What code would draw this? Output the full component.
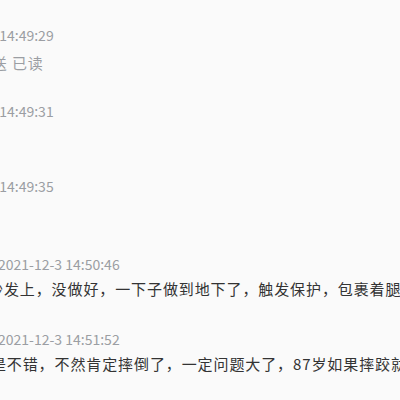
const font = { fontFamily: '"Microsoft YaHei", "Noto Sans CJK SC", sans-serif' };

type Row = {
  time: string;
  timeShift: string;
  text?: string;
  textShift?: string;
  textGray?: boolean;
  gap: string;
  textGap: string;
};

const rows: Row[] = [
  {
    time: "2021-12-3 14:49:29",
    timeShift: "ml-[-68px]",
    text: "已发送 已读",
    textShift: "ml-[-40px]",
    textGray: true,
    gap: "pt-[25px]",
    textGap: "mt-[8px]",
  },
  { time: "2021-12-3 14:49:31", timeShift: "ml-[-68px]", gap: "pt-[28px]", textGap: "mt-[5px]" },
  { time: "2021-12-3 14:49:35", timeShift: "ml-[-68px]", gap: "pt-[30px]", textGap: "mt-[5px]" },
  {
    time: "2021-12-3 14:50:46",
    timeShift: "ml-[-2px]",
    text: "沙发上，没做好，一下子做到地下了，触发保护，包裹着腿，",
    textShift: "ml-[-12px]",
    gap: "pt-[33px]",
    textGap: "mt-[5px]",
  },
  {
    time: "2021-12-3 14:51:52",
    timeShift: "ml-[-2px]",
    text: "还是不错，不然肯定摔倒了，一定问题大了，87岁如果摔跤就麻烦了",
    textShift: "ml-[-25px]",
    gap: "pt-[30px]",
    textGap: "mt-[5px]",
  },
];

export default function App() {
  return (
    <div className="w-[400px] h-[400px] overflow-hidden bg-[#fafafa]" style={font}>
      {rows.map((r) => (
        <div key={r.time} className={r.gap}>
          <div className={`whitespace-nowrap text-[14px] leading-[20px] text-[#9b9ea3] ${r.timeShift}`}>{r.time}</div>
          <div
            className={`h-[20px] whitespace-nowrap text-[15px] leading-[20px] tracking-[0.9px] ${r.textGap} ${
              r.textShift ?? ""
            } ${r.textGray ? "text-[#9b9ea3]" : "text-[#333333]"}`}
          >
            {r.text}
          </div>
        </div>
      ))}
    </div>
  );
}
